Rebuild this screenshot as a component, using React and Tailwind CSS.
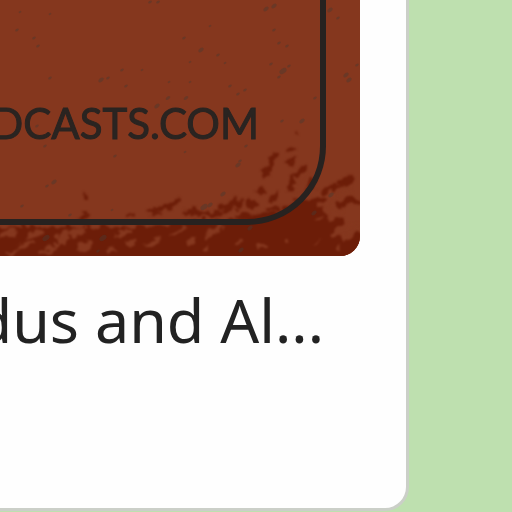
const specks = [
  [20, 12, 1.5], [17, 30, 2], [34, 38, 2], [38, 46, 2], [50, 78, 2], [50, 14, 1.5],
  [101, 80, 3], [108, 78, 2], [122, 70, 2], [126, 86, 2], [142, 70, 1.5], [150, 2, 2],
  [158, 2, 2], [184, 38, 2], [201, 50, 3], [210, 26, 1.5], [218, 55, 2], [225, 63, 1.5],
  [190, 62, 1.5], [169, 82, 1.5], [190, 82, 1.5], [168, 98, 2.5], [186, 98, 2.5], [157, 106, 3],
  [230, 86, 2], [238, 94, 2], [245, 90, 2], [266, 9, 3], [274, 6, 3], [274, 30, 2],
  [279, 43, 2], [287, 46, 2], [271, 64, 2], [283, 71, 4], [289, 66, 2], [279, 77, 2],
  [330, 10, 3], [338, 18, 2], [346, 75, 3], [349, 80, 3], [357, 65, 2], [315, 98, 2],
  [302, 121, 3], [282, 121, 2], [45, 146, 2], [37, 126, 2], [115, 156, 2], [185, 152, 1.5],
  [246, 146, 2], [54, 182, 3], [47, 186, 2], [22, 206, 2], [70, 215, 2], [112, 210, 1.5],
  [238, 165, 3], [240, 161, 2], [204, 207, 4], [210, 205, 3], [223, 194, 3], [46, 238, 4],
  [103, 238, 4], [98, 251, 2], [314, 213, 3], [241, 250, 3], [331, 195, 3], [250, 228, 3],
];

const lightFlecks = [
  [8, 233, 9, 4], [25, 245, 9, 3], [36, 234, 8, 4], [50, 249, 10, 3], [62, 238, 9, 6], [78, 232, 9, 4],
  [86, 244, 10, 5], [12, 252, 6, 2], [112, 250, 6, 3], [123, 232, 8, 3], [131, 243, 6, 3], [152, 243, 8, 4],
  [178, 231, 10, 2], [190, 242, 5, 4], [210, 236, 7, 3], [216, 229, 10, 3], [205, 247, 4, 2], [238, 243, 3, 2],
  [262, 246, 3, 2], [287, 242, 3, 2], [318, 241, 4, 1], [345, 237, 8, 2], [350, 225, 8, 3], [335, 214, 9, 3],
  [320, 220, 5, 2], [300, 188, 7, 4], [304, 178, 5, 2], [345, 194, 7, 3], [328, 204, 5, 2], [340, 247, 4, 2],
];

const darkFlecks = [
  [273, 160, 9, 4, -50], [266, 171, 7, 3, -50], [289, 150, 5, 2, -20], [290, 162, 6, 2, -25], [300, 171, 9, 3, -30],
  [293, 184, 5, 8, 10], [310, 184, 8, 3, -40], [346, 180, 8, 5, -20], [336, 187, 7, 3, 0], [325, 190, 8, 3, -20],
  [318, 201, 10, 4, -20], [348, 202, 11, 4, -8], [260, 191, 6, 3, -20], [274, 196, 7, 4, -30], [255, 204, 8, 4, 0],
  [237, 202, 8, 4, -20], [227, 208, 9, 4, 10], [214, 213, 11, 3, 0], [202, 214, 9, 3, 0], [190, 211, 9, 2, 0],
  [176, 202, 5, 2, -30], [165, 207, 12, 3, -8], [153, 213, 8, 3, 0], [272, 209, 8, 3, -20], [86, 195, 2, 3, 0],
  [83, 217, 4, 2, 0], [129, 215, 4, 2, 0], [245, 216, 12, 3, 0], [298, 133, 2, 2, 0], [333, 222, 10, 5, 0],
];

function Artwork() {
  return (
    <svg viewBox="0 0 360 256" role="img" aria-label="Podcast cover" className="block h-full w-[360px]">
      <defs>
        <filter id="rough" x="-5%" y="-5%" width="110%" height="110%" colorInterpolationFilters="sRGB">
          <feTurbulence type="fractalNoise" baseFrequency="0.11" numOctaves="2" seed="4" />
          <feDisplacementMap in="SourceGraphic" scale="13" xChannelSelector="R" yChannelSelector="G" />
          <feGaussianBlur stdDeviation="1.1" />
        </filter>
      </defs>
      <rect width="360" height="256" fill="#85371e" />
      <g filter="url(#rough)">
        <path
          d="M-10 227H140L200 220 240 220 278 212 300 198 318 205 326 216 340 225 330 233 343 240 370 228V270H-10Z"
          fill="#6c1d08"
        />
        {darkFlecks.map(([x, y, rx, ry, turn]) => (
          <ellipse key={`${x}-${y}`} cx={x} cy={y} rx={rx} ry={ry} transform={`rotate(${turn} ${x} ${y})`} fill="#6c1d08" />
        ))}
        {lightFlecks.map(([x, y, rx, ry]) => (
          <ellipse key={`${x}-${y}`} cx={x} cy={y} rx={rx} ry={ry} transform={`rotate(-20 ${x} ${y})`} fill="#85371e" />
        ))}
      </g>
      <g fill="#4a3a32" opacity="0.45">
        {specks.map(([x, y, size]) => (
          <ellipse key={`${x}-${y}`} cx={x} cy={y} rx={size} ry={size * 0.6} transform={`rotate(-35 ${x} ${y})`} />
        ))}
      </g>
      <path d="M323 -5V145A76 76 0 0 1 247 222H-5" fill="none" stroke="#272220" strokeWidth="6" />
      <text
        x="259"
        y="139"
        textAnchor="end"
        className="fill-[#2a2421] stroke-[#2a2421] stroke-1 font-['Lato',sans-serif] text-[42px]"
      >
        PODCASTS.COM
      </text>
    </svg>
  );
}

export default function App() {
  return (
    <main className="h-screen overflow-hidden bg-[#bee0af] pr-[103px]">
      <article className="h-[511px] overflow-hidden rounded-br-[24px] border-r-3 border-b-3 border-[#cbcfc8] bg-[#fefefe] pr-[46px]">
        <div className="flex h-[256px] justify-end overflow-hidden rounded-br-[20px] bg-[#85371e]">
          <Artwork />
        </div>
        <div className="flex justify-end pt-6 pr-9">
          <h2 className="font-['Noto_Sans','Open_Sans',sans-serif] text-[61px] leading-[80px] whitespace-nowrap text-[#222]">
            dus and Al...
          </h2>
        </div>
      </article>
    </main>
  );
}
